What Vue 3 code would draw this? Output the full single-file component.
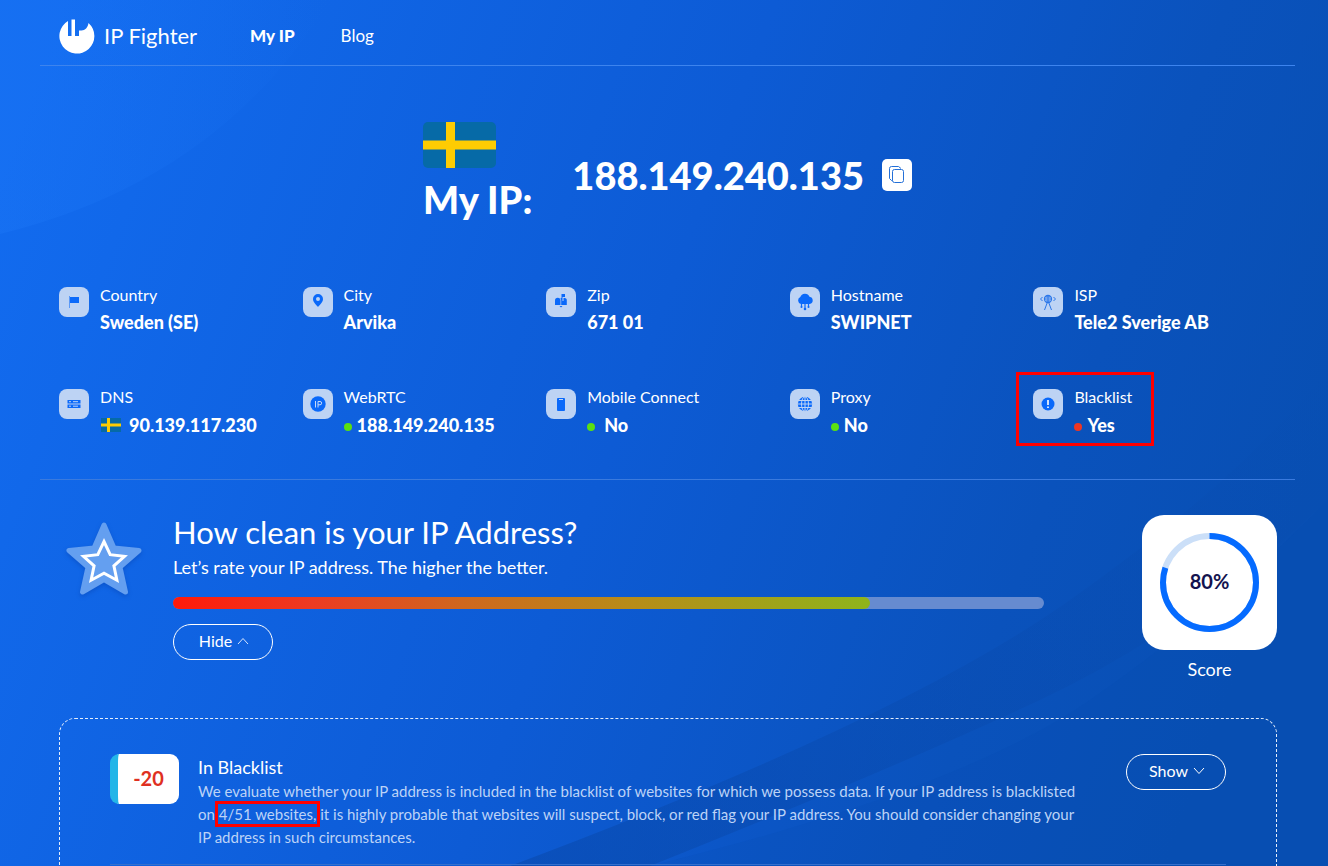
<script setup>
const facts = [
  { label: 'Country', value: 'Sweden (SE)', icon: 'flag' },
  { label: 'City', value: 'Arvika', icon: 'pin' },
  { label: 'Zip', value: '671 01', icon: 'mailbox' },
  { label: 'Hostname', value: 'SWIPNET', icon: 'cloud' },
  { label: 'ISP', value: 'Tele2 Sverige AB', icon: 'tower' },
  { label: 'DNS', value: '90.139.117.230', icon: 'server', flag: true },
  { label: 'WebRTC', value: '188.149.240.135', icon: 'ip', dot: 'ok' },
  { label: 'Mobile Connect', value: 'No', icon: 'phone', dot: 'ok', wide: true },
  { label: 'Proxy', value: 'No', icon: 'globe', dot: 'ok' },
  { label: 'Blacklist', value: 'Yes', icon: 'alert', dot: 'bad', marked: true },
]
const score = 80
const circumference = 2 * Math.PI * 46.5
</script>

<template>
  <div class="page">
    <svg class="backdrop" viewBox="0 0 1328 866" preserveAspectRatio="none" aria-hidden="true">
      <defs>
        <linearGradient id="base" gradientUnits="userSpaceOnUse" x1="0" y1="180" x2="1250" y2="640">
          <stop offset="0" stop-color="#126bef" />
          <stop offset="0.5" stop-color="#0d5bd5" />
          <stop offset="0.82" stop-color="#0a52bc" />
          <stop offset="1" stop-color="#084fb3" />
        </linearGradient>
        <linearGradient id="glow" x1="0" y1="0" x2="1" y2="0">
          <stop offset="0" stop-color="#1d78f8" stop-opacity="0.35" />
          <stop offset="1" stop-color="#1d78f8" stop-opacity="0" />
        </linearGradient>
        <linearGradient id="wave" x1="0" y1="1" x2="1" y2="0">
          <stop offset="0" stop-color="#0846a6" stop-opacity="0.5" />
          <stop offset="0.5" stop-color="#0846a6" stop-opacity="0.25" />
          <stop offset="1" stop-color="#0846a6" stop-opacity="0" />
        </linearGradient>
      </defs>
      <rect width="1328" height="866" fill="url(#base)" />
      <path d="M0 0H330Q220 180 0 234Z" fill="url(#glow)" />
      <path d="M510 866Q900 720 1070 600T1328 370V500Q1190 630 1040 700T650 866Z" fill="url(#wave)" />
      <path d="M650 866Q960 790 1090 700T1328 500V866Z" fill="#084cae" fill-opacity="0.15" />
    </svg>

    <header class="header">
      <a class="brand" href="#">
        <svg width="36" height="36" viewBox="0 0 36 36" aria-hidden="true">
          <path fill="#fff" d="M9 3V18h3.500V1.500H16V18h4v-5.500h2.500c3.500 0 6.500-3 7-7.500A17.500 17.500 0 1 1 9 3Z" />
        </svg>
        <span>IP Fighter</span>
      </a>
      <nav class="nav">
        <a href="#" class="current">My IP</a>
        <a href="#">Blog</a>
      </nav>
    </header>

    <main class="main">
      <section class="hero">
        <div class="hero-name">
          <svg class="hero-flag" width="73" height="46" viewBox="0 0 73 46" role="img" aria-label="Sweden">
            <rect width="73" height="46" rx="5" fill="#066aa7" />
            <path d="M23 0h9v46h-9zM0 18.500h73v9H0z" fill="#fecc02" />
          </svg>
          <h1>My IP:</h1>
        </div>
        <strong class="hero-ip">188.149.240.135</strong>
        <button class="copy" type="button" aria-label="Copy">
          <svg width="18" height="20" viewBox="0 0 18 20" fill="none" stroke="#2470d8" aria-hidden="true">
            <path d="M4.500 15.500H3.500l-2-2v-10q0-2 2-2h7l2.500 2" />
            <rect x="4.500" y="4.500" width="11" height="13" rx="2" />
          </svg>
        </button>
      </section>

      <dl class="facts">
        <div v-for="f in facts" :key="f.label" class="fact" :class="{ marked: f.marked }">
          <span class="tile">
            <svg width="18" height="18" viewBox="0 0 18 18" fill="#0a69fa" aria-hidden="true">
              <template v-if="f.icon === 'flag'">
                <path d="M4 3h1v12H4z" opacity=".55" /><path d="M5 4h9v6H5z" />
              </template>
              <path v-else-if="f.icon === 'pin'" fill-rule="evenodd" d="M9 1a5 5 0 0 1 5 5c0 3.200-3 5.500-5 8-2-2.500-5-4.800-5-8a5 5 0 0 1 5-5Zm0 3a2 2 0 1 0 0 4 2 2 0 0 0 0-4Z" />
              <path v-else-if="f.icon === 'mailbox'" d="M3 12V7.500a2.700 2.700 0 0 1 5.500 0V12ZM9.200 12V7.500c0-1-.3-1.900-.9-2.500H9.500V1H13v3h-2.500v4h1V5h1A2.300 2.300 0 0 1 14.800 7.500V12ZM7.500 13h3L9 14.500Z" />
              <template v-else-if="f.icon === 'cloud'">
                <path d="M5 11a3.700 3.700 0 0 1-.7-7A4.900 4.900 0 0 1 13.500 3.700a3.700 3.700 0 0 1 .2 7.300Z" />
                <path d="M5.500 11v3M9 11v5M12.500 11v3" fill="none" stroke="#0a69fa" stroke-width="1.200" />
                <circle cx="9" cy="16" r="1.300" /><circle cx="5.500" cy="14" r="1" /><circle cx="12.500" cy="14" r="1" />
              </template>
              <g v-else-if="f.icon === 'tower'" fill="none" stroke="#2b77ea">
                <circle cx="9" cy="6" r="3.500" stroke-width="1.300" />
                <path d="M5.500 6h7M9 2.500v7M7 4h4M7 8h4M8.500 9 5.500 17M9.500 9l3 8M3.500 4l-2 2 2 2M14.500 4l2 2-2 2" />
              </g>
              <template v-else-if="f.icon === 'server'">
                <path d="M2.500 5h13v3.500h-13zM2.500 9.500h13V13h-13z" />
                <path d="M4 6.700h2M8 6.700h5M4 11.200h2M8 11.200h5" fill="none" stroke="#bdd3f4" />
              </template>
              <template v-else-if="f.icon === 'ip'">
                <circle cx="9" cy="9" r="7.700" />
                <path d="M6.500 6v6.500M9 12.500V6.500h2a1.500 1.500 0 0 1 0 3.300H9" fill="none" stroke="#c7daf7" />
              </template>
              <template v-else-if="f.icon === 'phone'">
                <rect x="5" y="3" width="8" height="13" rx="1" />
                <path d="M7 4.500h4" stroke="#bdd3f4" />
              </template>
              <template v-else-if="f.icon === 'globe'">
                <circle cx="9" cy="9" r="7.200" />
                <g fill="none" stroke="#bdd3f4">
                  <ellipse cx="9" cy="9" rx="3.500" ry="7.300" /><path d="M9 1v16M1.500 9h15M2 5.500h14M2 12.500h14" />
                </g>
              </template>
              <template v-else>
                <circle cx="9" cy="9" r="6.500" />
                <path d="M9 5v5M9 11.500v1.500" stroke="#d2e2fb" stroke-width="2" />
              </template>
            </svg>
          </span>
          <div class="fact-text">
            <dt>{{ f.label }}</dt>
            <dd :class="{ status: f.dot || f.flag }">
              <svg v-if="f.flag" class="mini-flag" width="20" height="14" viewBox="0 0 20 14" aria-hidden="true">
                <rect width="20" height="14" fill="#066aa7" />
                <path d="M6 0h3v14H6zM0 5.500h20v3H0z" fill="#fecc02" />
              </svg>
              <span v-if="f.dot" class="dot" :class="[f.dot, { wide: f.wide }]"></span>
              <span>{{ f.value }}</span>
            </dd>
          </div>
        </div>
      </dl>

      <section class="rating">
        <svg class="star" width="78" height="78" viewBox="0 0 78 78" aria-hidden="true">
          <path d="M39 5 49 28 74 30.500 55 47 60.500 72 39 59.500 17.500 72 23 47 4 30.500 29 28Z" fill="#649ff0" stroke="#649ff0" stroke-width="5" stroke-linejoin="round" />
          <path d="m39 21.500 6.200 13.200 14.300 1.600-10.600 9.600 3 14.300L39 53.200 26.100 60.200l3-14.300-10.600-9.600 14.300-1.600Z" fill="none" stroke="#fff" stroke-width="3" />
        </svg>
        <div class="rating-body">
          <h2>How clean is your IP Address?</h2>
          <p>Let’s rate your IP address. The higher the better.</p>
          <div class="track"><div class="fill" :style="{ width: score + '%' }"></div></div>
          <button class="pill" type="button">
            Hide
            <svg width="12" height="8" viewBox="0 0 12 8" fill="none" stroke="#d8e6fd" aria-hidden="true"><path d="m1 7 5-5.500L11 7" /></svg>
          </button>
        </div>
        <div class="score">
          <div class="score-card">
            <svg width="99" height="99" viewBox="0 0 99 99" fill="none" stroke-width="6" aria-hidden="true">
              <circle cx="49.500" cy="49.500" r="46.500" stroke="#cbdff8" />
              <circle cx="49.500" cy="49.500" r="46.500" stroke="#056bff" transform="rotate(-90 49.500 49.500)" :stroke-dasharray="`${circumference * score / 100} ${circumference}`" />
            </svg>
            <span>{{ score }}%</span>
          </div>
          <div class="score-label">Score</div>
        </div>
      </section>

      <section class="details">
        <article class="detail">
          <div class="penalty">-20</div>
          <div class="detail-text">
            <h3>In Blacklist</h3>
            <p>We evaluate whether your IP address is included in the blacklist of websites for which we possess data. If your IP address is blacklisted on <mark>4/51 websites,</mark> it is highly probable that websites will suspect, block, or red flag your IP address. You should consider changing your IP address in such circumstances.</p>
          </div>
          <button class="pill" type="button">
            Show
            <svg width="12" height="8" viewBox="0 0 12 8" fill="none" stroke="#fff" aria-hidden="true"><path d="m1 1 5 5.500L11 1" /></svg>
          </button>
        </article>
      </section>
    </main>
  </div>
</template>

<style>
body { margin: 0; }
</style>

<style scoped>
.page {
  position: relative;
  isolation: isolate;
  display: flex;
  flex-direction: column;
  box-sizing: border-box;
  min-height: 100vh;
  padding: 0 33px 0 40px;
  color: #fff;
  font-family: Lato, "Open Sans", sans-serif;
}
.page *, .page *::after { box-sizing: border-box; }
.backdrop { position: absolute; inset: 0; z-index: -1; width: 100%; height: 100%; }
a { color: inherit; text-decoration: none; }
h1, h2, h3, p, dl, dd { margin: 0; }

.header {
  display: flex;
  align-items: center;
  height: 66px;
  padding: 6px 19px 0;
  border-bottom: 1px solid #3d84ee;
}
.brand { display: flex; align-items: center; gap: 9px; font-size: 22px; }
.nav { display: flex; gap: 46px; margin-left: 53px; font-size: 17px; }
.nav .current { font-weight: 900; }

.main { display: flex; flex: 1; flex-direction: column; }
.hero { display: flex; align-items: center; justify-content: center; padding: 56px 0 55px; }
.hero-name { display: flex; flex-direction: column; gap: 6px; padding-bottom: 6px; margin-bottom: -2px; }
.hero-flag { display: block; }
h1, .hero-ip { font-size: 38px; line-height: 50px; font-weight: 900; }
.hero-ip { margin-left: 40px; }
.copy {
  display: grid;
  place-items: center;
  width: 30px;
  height: 32px;
  margin-left: 18px;
  padding: 0;
  border: 0;
  border-radius: 5px;
  background: #fff;
}

.facts {
  display: grid;
  grid-template-columns: repeat(5, 1fr);
  row-gap: 50px;
  padding: 2px 18px 40px 19px;
  border-bottom: 1px solid #3a7ade;
}
.fact { position: relative; display: flex; align-items: flex-start; gap: 11px; height: 52px; }
.tile { display: grid; place-items: center; width: 30px; height: 30px; margin-top: 2px; border-radius: 8px; background: #bdd3f4; }
dt { font-size: 16px; line-height: 20px; }
dd { padding-top: 5px; font-size: 18px; line-height: 24px; font-weight: 900; }
.status { display: flex; align-items: center; padding-top: 6px; }
.mini-flag { margin: 0 8px 0 1px; }
.dot { width: 8px; height: 8px; margin: 4px 5px 0 0; border-radius: 50%; }
.dot.wide { margin-right: 9px; }
.ok { background: #5be010; }
.bad { background: #ee3622; }
.marked::after { content: ""; position: absolute; top: -15px; left: -17px; width: 138px; height: 74px; border: 3px solid #f00; }

.rating { display: flex; align-items: flex-start; padding: 35px 18px 0 25px; }
.star { margin-top: 5px; filter: drop-shadow(0 2px 2px rgb(0 50 150 / 30%)); }
.rating-body { flex: 1; margin: 0 98px 0 30px; }
h2 { font-size: 31px; line-height: 34px; font-weight: 400; }
.rating-body p { margin-top: 6px; font-size: 18px; line-height: 24px; }
.track { height: 12px; margin: 18px 0 15px; border-radius: 6px; background: #668bd0; }
.fill { height: 100%; border-radius: 6px; background: linear-gradient(90deg, #ff1a0a, #ec3b22 20%, #cf681e 42%, #b88b18 65%, #8fb41b); }
.pill {
  display: inline-flex;
  align-items: center;
  justify-content: center;
  gap: 5px;
  flex: none;
  width: 100px;
  height: 36px;
  padding: 0 0 2px 2px;
  border: 1px solid #fff;
  border-radius: 18px;
  background: none;
  color: #fff;
  font: 16px/20px Lato, "Open Sans", sans-serif;
}
.score { text-align: center; }
.score-card { display: grid; place-items: center; width: 135px; height: 135px; border-radius: 22px; background: #fff; }
.score-card > * { grid-area: 1 / 1; }
.score-card span { padding-bottom: 4px; color: #14134f; font-size: 20px; font-weight: 700; }
.score-label { margin-top: 6px; font-size: 18px; line-height: 26px; }

.details { flex: 1; margin: 36px 18px 0 19px; padding: 35px 50px 0; border: 1px dashed #e4edfb; border-bottom: 0; border-radius: 16px 16px 0 0; }
.detail { display: flex; align-items: flex-start; padding-bottom: 15px; border-bottom: 1px solid #356fcc; }
.penalty { display: grid; place-items: center; flex: none; width: 69px; height: 50px; padding-bottom: 2px; border-left: 8px solid #23b5e8; border-radius: 9px; background: #fff; color: #df3021; font-size: 20px; font-weight: 700; }
.detail-text { flex: 1; margin: 0 42px 0 19px; }
h3 { font-size: 18px; line-height: 26px; font-weight: 400; }
.detail-text p { color: #bcd3f7; font-size: 15px; line-height: 23px; }
mark { outline: 3px solid #f00; outline-offset: 1px; background: none; color: inherit; }
</style>
